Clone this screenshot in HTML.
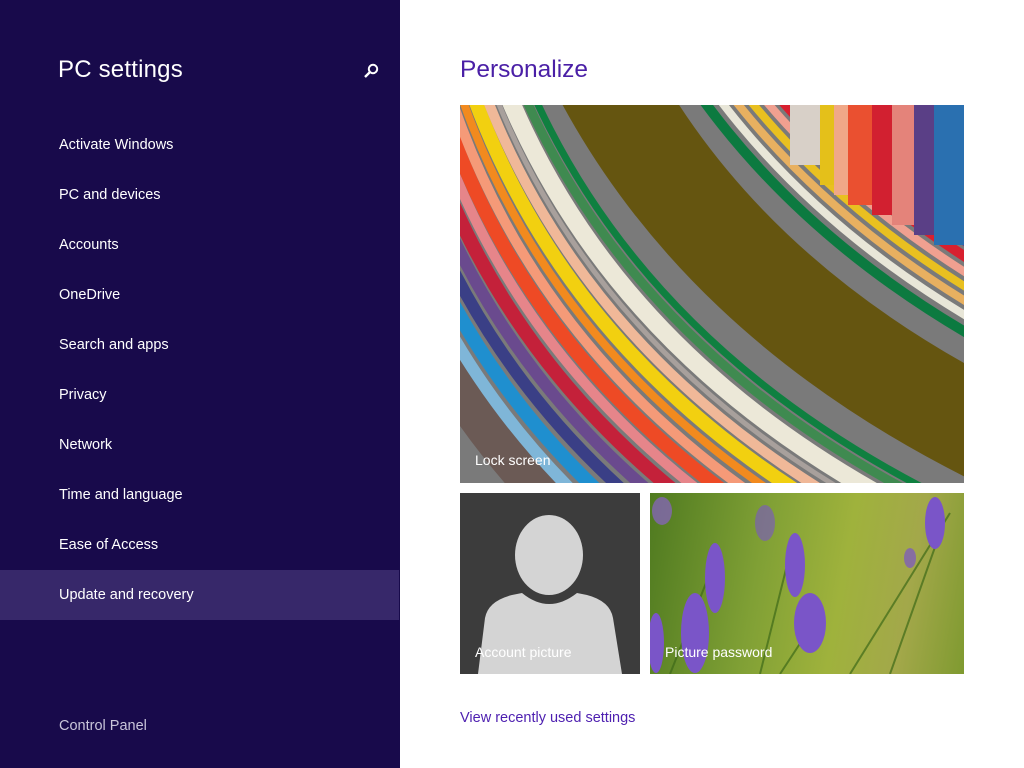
<!DOCTYPE html>
<html><head><meta charset="utf-8"><style>
*{margin:0;padding:0;box-sizing:border-box}
body{width:1024px;height:768px;overflow:hidden;background:#fff;font-family:"Segoe UI","Liberation Sans",sans-serif;position:relative}
#left{position:absolute;left:0;top:0;width:400px;height:768px;background:#180a4b}
.t{position:absolute;left:58px;top:56px;font-size:24px;color:#fff;font-weight:300;letter-spacing:0.2px}
.it{position:absolute;left:0;width:399px;height:50px;line-height:50px;padding-left:59px;color:#fff;font-size:14.5px}
.sel{background:#37286a}
.cp{position:absolute;left:59px;top:718px;color:#c9c5da;font-size:14.5px}
.h{position:absolute;left:460px;top:56px;font-size:24.5px;color:#4a1fa6;font-weight:300}
.tile{position:absolute;overflow:hidden}
.lbl{position:absolute;color:#fff;font-size:14px}
.link{position:absolute;left:460px;top:710px;color:#4d1fb0;font-size:14.5px}
</style></head><body>
<div id="left">
<div class="t">PC settings</div>
<svg style="position:absolute;left:362px;top:62px" width="18" height="18" viewBox="0 0 18 18"><circle cx="11" cy="7" r="4.2" fill="none" stroke="#fff" stroke-width="2"/><line x1="8" y1="10" x2="3" y2="15" stroke="#fff" stroke-width="2.4"/></svg>
<div class="it" style="top:120px">Activate Windows</div>
<div class="it" style="top:170px">PC and devices</div>
<div class="it" style="top:220px">Accounts</div>
<div class="it" style="top:270px">OneDrive</div>
<div class="it" style="top:320px">Search and apps</div>
<div class="it" style="top:370px">Privacy</div>
<div class="it" style="top:420px">Network</div>
<div class="it" style="top:470px">Time and language</div>
<div class="it" style="top:520px">Ease of Access</div>
<div class="it sel" style="top:570px">Update and recovery</div>
<div class="cp">Control Panel</div>
</div>
<div class="h">Personalize</div>

<div class="tile" style="left:460px;top:105px;width:504px;height:378px;background:#6a5a10">
<svg width="504" height="378" viewBox="0 0 504 378">
<defs><path id="c" d="M60 -120 Q180 260 640 430" fill="none"/></defs>
<rect width="504" height="378" fill="#7a7a7a"/>
<g fill="none">
<use href="#c" transform="translate(-150,215)" stroke="#6b5a55" stroke-width="40"/>
<use href="#c" transform="translate(-136,195)" stroke="#7fb6d8" stroke-width="12"/>
<use href="#c" transform="translate(-126,180)" stroke="#1f8fcf" stroke-width="14"/>
<use href="#c" transform="translate(-116,165)" stroke="#3a3f86" stroke-width="12"/>
<use href="#c" transform="translate(-107,151)" stroke="#6a4a8e" stroke-width="12"/>
<use href="#c" transform="translate(-98,137)" stroke="#c4213a" stroke-width="14"/>
<use href="#c" transform="translate(-89,124)" stroke="#e6858a" stroke-width="10"/>
<use href="#c" transform="translate(-81,112)" stroke="#ee4a25" stroke-width="14"/>
<use href="#c" transform="translate(-73,100)" stroke="#f59a78" stroke-width="10"/>
<use href="#c" transform="translate(-66,89)" stroke="#f28a1e" stroke-width="8"/>
<use href="#c" transform="translate(-58,77)" stroke="#f2d010" stroke-width="14"/>
<use href="#c" transform="translate(-50,65)" stroke="#f0b898" stroke-width="10"/>
<use href="#c" transform="translate(-44,56)" stroke="#a8a09c" stroke-width="5"/>
<use href="#c" transform="translate(-36,44)" stroke="#ece8d8" stroke-width="18"/>
<use href="#c" transform="translate(-26,30)" stroke="#3f8a50" stroke-width="9"/>
<use href="#c" transform="translate(-20,22)" stroke="#0f8040" stroke-width="7"/>
<use href="#c" transform="translate(28,-42)" stroke="#655510" stroke-width="100"/>
<use href="#c" transform="translate(72,-106)" stroke="#0c7a40" stroke-width="10"/>
<use href="#c" transform="translate(80,-118)" stroke="#e8e6d8" stroke-width="8"/>
<use href="#c" transform="translate(87,-128)" stroke="#e8b060" stroke-width="8"/>
<use href="#c" transform="translate(94,-138)" stroke="#e9c020" stroke-width="8"/>
<use href="#c" transform="translate(101,-148)" stroke="#f0a090" stroke-width="8"/>
<use href="#c" transform="translate(108,-159)" stroke="#d8202f" stroke-width="10"/>
<use href="#c" transform="translate(115,-169)" stroke="#6a3f8a" stroke-width="8"/>
<use href="#c" transform="translate(122,-180)" stroke="#2a8ad0" stroke-width="10"/>
<use href="#c" transform="translate(129,-190)" stroke="#5a4a4a" stroke-width="8"/>
<use href="#c" transform="translate(170,-250)" stroke="#9a9a9a" stroke-width="80"/>
</g>
<rect x="330" y="0" width="30" height="60" fill="#d8d0c8"/>
<rect x="360" y="0" width="14" height="80" fill="#e4c01a"/>
<rect x="374" y="0" width="14" height="90" fill="#f0a888"/>
<rect x="388" y="0" width="24" height="100" fill="#ea5030"/>
<rect x="412" y="0" width="20" height="110" fill="#d22030"/>
<rect x="432" y="0" width="22" height="120" fill="#e4837a"/>
<rect x="454" y="0" width="20" height="130" fill="#5a3f86"/>
<rect x="474" y="0" width="30" height="140" fill="#2a70b0"/>
</svg>
<div class="lbl" style="left:15px;top:347px">Lock screen</div>
</div>

<div class="tile" style="left:460px;top:493px;width:180px;height:181px;background:#3c3c3c">
<svg width="180" height="181"><ellipse cx="89" cy="62" rx="34" ry="40" fill="#d4d4d4"/>
<path d="M18 181 L25 125 Q28 108 52 102 L62 100 Q89 122 117 100 L127 102 Q150 108 153 125 L162 181 Z" fill="#d4d4d4"/></svg>
<div class="lbl" style="left:15px;top:151px">Account picture</div>
</div>

<div class="tile" style="left:650px;top:493px;width:314px;height:181px;background:linear-gradient(100deg,#4f7a20 0%,#80a035 35%,#9fb23c 60%,#a3a84a 80%,#7f9a30 100%)">
<svg width="314" height="181">
<g stroke="#3e6a18" stroke-width="2" fill="none" opacity=".7"><path d="M20 181 L60 80"/><path d="M110 181 L140 60"/><path d="M130 181 L170 120"/><path d="M200 181 L300 20"/><path d="M240 181 L290 40"/></g>
<g fill="#7a55c8">
<ellipse cx="12" cy="18" rx="10" ry="14" fill="#8a62c8" opacity=".7"/>
<ellipse cx="115" cy="30" rx="10" ry="18" opacity=".6"/>
<ellipse cx="145" cy="72" rx="10" ry="32"/>
<ellipse cx="65" cy="85" rx="10" ry="35"/>
<ellipse cx="45" cy="140" rx="14" ry="40"/>
<ellipse cx="160" cy="130" rx="16" ry="30"/>
<ellipse cx="285" cy="30" rx="10" ry="26"/>
<ellipse cx="260" cy="65" rx="6" ry="10" opacity=".7"/>
<ellipse cx="6" cy="150" rx="8" ry="30"/>
</g></svg>
<div class="lbl" style="left:15px;top:151px">Picture password</div>
</div>

<div class="link">View recently used settings</div>
</body></html>
